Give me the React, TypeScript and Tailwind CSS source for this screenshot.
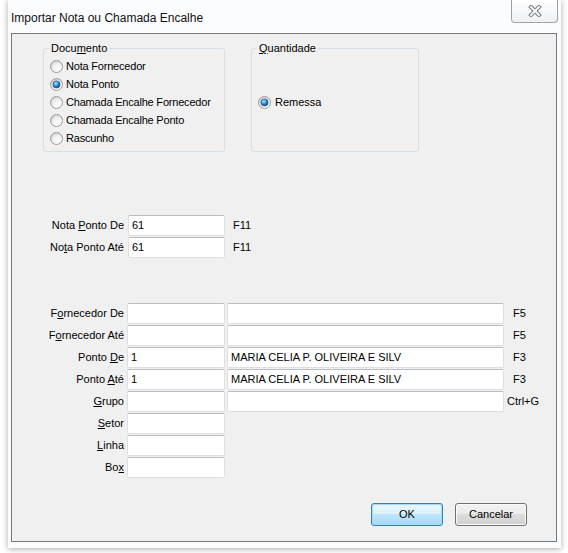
import React from "react";

function Radio({ checked }: { checked?: boolean }) {
  return (
    <svg width="13" height="13" viewBox="0 0 13 13" className="shrink-0">
      <defs>
        <radialGradient id="rg-off" cx="0.62" cy="0.68" r="0.7">
          <stop offset="0" stopColor="#ffffff" />
          <stop offset="0.55" stopColor="#f1f1f1" />
          <stop offset="1" stopColor="#cdcdcd" />
        </radialGradient>
        <radialGradient id="rg-on" cx="0.4" cy="0.35" r="0.65">
          <stop offset="0" stopColor="#b9ecff" />
          <stop offset="0.45" stopColor="#3a9ee0" />
          <stop offset="1" stopColor="#0b4680" />
        </radialGradient>
      </defs>
      <circle cx="6.5" cy="6.5" r="6" fill="url(#rg-off)" stroke="#9a9c9f" strokeWidth="1" />
      {checked && <circle cx="6.5" cy="6.5" r="3.6" fill="url(#rg-on)" stroke="#1d4f7c" strokeWidth="0.6" />}
    </svg>
  );
}

function RadioRow({ label, checked }: { label: React.ReactNode; checked?: boolean }) {
  return (
    <div className="h-[18px] flex items-center gap-[3px]">
      <Radio checked={checked} />
      <span className="text-[11px] leading-[13px] tracking-[-0.2px]">{label}</span>
    </div>
  );
}

function Input({ w, value }: { w: string; value?: string }) {
  return (
    <div
      className={`${w} h-[21px] bg-white border border-[#dcdfe4] border-t-[#b9bcc1] rounded-[2px] flex items-center pl-[3px] text-[11px] leading-[13px] shrink-0`}
    >
      {value}
    </div>
  );
}

function Row({
  label,
  v1,
  v2,
  k,
  showSecond,
  kOffset,
}: {
  label: React.ReactNode;
  v1?: string;
  v2?: string;
  k?: string;
  showSecond?: boolean;
  kOffset?: string;
}) {
  return (
    <div className="h-[21px] flex items-center">
      <div className="w-[112px] text-right text-[11px] leading-[13px] shrink-0">{label}</div>
      <div className="ml-[3px]">
        <Input w="w-[98px]" value={v1} />
      </div>
      {showSecond && (
        <div className="ml-[2px]">
          <Input w="w-[277px]" value={v2} />
        </div>
      )}
      {k && <span className={`${kOffset ?? "ml-[9px]"} text-[11px] leading-[13px]`}>{k}</span>}
    </div>
  );
}

export default function App() {
  return (
    <div className="w-[568px] h-[553px] bg-white overflow-hidden font-['Liberation_Sans',Arial,sans-serif] text-black">
      <div className="ml-[8px] w-[553px] h-[548px] bg-[#fbfcfd] shadow-[0_1px_6px_rgba(0,0,0,0.35)] flex flex-col relative">
        <div className="h-[33px] shrink-0 relative">
          <div className="pl-[3px] pt-[11px] text-[12px] leading-[15px] text-[#111]">
            Importar Nota ou Chamada Encalhe
          </div>
          <div className="absolute top-0 right-[3px] w-[47px] h-[23px] border border-t-0 border-[#9ea3a8] rounded-b-[4px] bg-[linear-gradient(#ffffff,#eef0f2)] flex items-center justify-center">
            <svg width="14" height="12" viewBox="0 0 14 12">
              <path d="M3 2 L11 10 M11 2 L3 10" stroke="#7a7d80" strokeWidth="4" strokeLinecap="square" fill="none" />
              <path d="M3 2 L11 10 M11 2 L3 10" stroke="#f4f5f6" strokeWidth="2" strokeLinecap="square" fill="none" />
            </svg>
          </div>
        </div>
        <div className="ml-[3px] mr-[4px] mb-[6px] flex-1 border border-[#777b80] bg-[#f0f0f0] flex flex-col">
          <div className="pt-[8px] pl-[31px] flex gap-[26px]">
            <fieldset className="w-[182px] h-[110px] border border-[#d5dfe5] rounded-[3px] pl-[6px]">
              <legend className="-ml-[1px] px-[2px] text-[11px] leading-[13px]">
                Docu<u>m</u>ento
              </legend>
              <div className="pt-[2px] flex flex-col">
                <RadioRow label="Nota Fornecedor" />
                <RadioRow label="Nota Ponto" checked />
                <RadioRow label="Chamada Encalhe Fornecedor" />
                <RadioRow label="Chamada Encalhe Ponto" />
                <RadioRow label="Rascunho" />
              </div>
            </fieldset>
            <fieldset className="w-[168px] h-[110px] border border-[#d5dfe5] rounded-[3px] pl-[6px]">
              <legend className="-ml-[1px] px-[2px] text-[11px] leading-[13px]">
                <u>Q</u>uantidade
              </legend>
              <div className="h-[94px] flex items-center">
                <div className="flex items-center gap-[4px]">
                  <Radio checked />
                  <span className="text-[11px] leading-[13px]">Remessa</span>
                </div>
              </div>
            </fieldset>
          </div>

          <div className="mt-[63px] flex flex-col gap-[1px]">
            <div className="h-[21px] flex items-center">
              <div className="w-[112px] text-right text-[11px] leading-[13px]">
                Nota <u>P</u>onto De
              </div>
              <div className="ml-[4px]">
                <Input w="w-[97px]" value="61" />
              </div>
              <span className="ml-[8px] text-[11px] leading-[13px]">F11</span>
            </div>
            <div className="h-[21px] flex items-center">
              <div className="w-[112px] text-right text-[11px] leading-[13px]">
                No<u>t</u>a Ponto Até
              </div>
              <div className="ml-[4px]">
                <Input w="w-[97px]" value="61" />
              </div>
              <span className="ml-[8px] text-[11px] leading-[13px]">F11</span>
            </div>
          </div>

          <div className="mt-[45px] flex flex-col gap-[1px]">
            <Row label={<>F<u>o</u>rnecedor De</>} showSecond k="F5" />
            <Row label={<>F<u>o</u>rnecedor Até</>} showSecond k="F5" />
            <Row label={<>Ponto <u>D</u>e</>} v1="1" v2="MARIA CELIA P. OLIVEIRA E SILV" showSecond k="F3" />
            <Row label={<>Ponto <u>A</u>té</>} v1="1" v2="MARIA CELIA P. OLIVEIRA E SILV" showSecond k="F3" />
            <Row label={<><u>G</u>rupo</>} showSecond k="Ctrl+G" kOffset="ml-[3px]" />
            <Row label={<><u>S</u>etor</>} />
            <Row label={<><u>L</u>inha</>} />
            <Row label={<>Bo<u>x</u></>} />
          </div>

          <div className="mt-[25px] flex justify-end gap-[12px] pr-[29px]">
            <button className="w-[72px] h-[23px] rounded-[3px] border border-[#3c7fb1] shadow-[inset_0_0_0_1px_#9fdcf7] bg-[linear-gradient(#eaf6fd_0%,#d9f0fc_50%,#bee6fd_50%,#a7d9f5_100%)] text-[11px] leading-[13px]">
              OK
            </button>
            <button className="w-[72px] h-[23px] rounded-[3px] border border-[#707070] shadow-[inset_0_0_0_1px_#fbfbfb] bg-[linear-gradient(#f2f2f2_0%,#ebebeb_50%,#dddddd_50%,#cfcfcf_100%)] text-[11px] leading-[13px]">
              Cancelar
            </button>
          </div>
        </div>
      </div>
    </div>
  );
}
